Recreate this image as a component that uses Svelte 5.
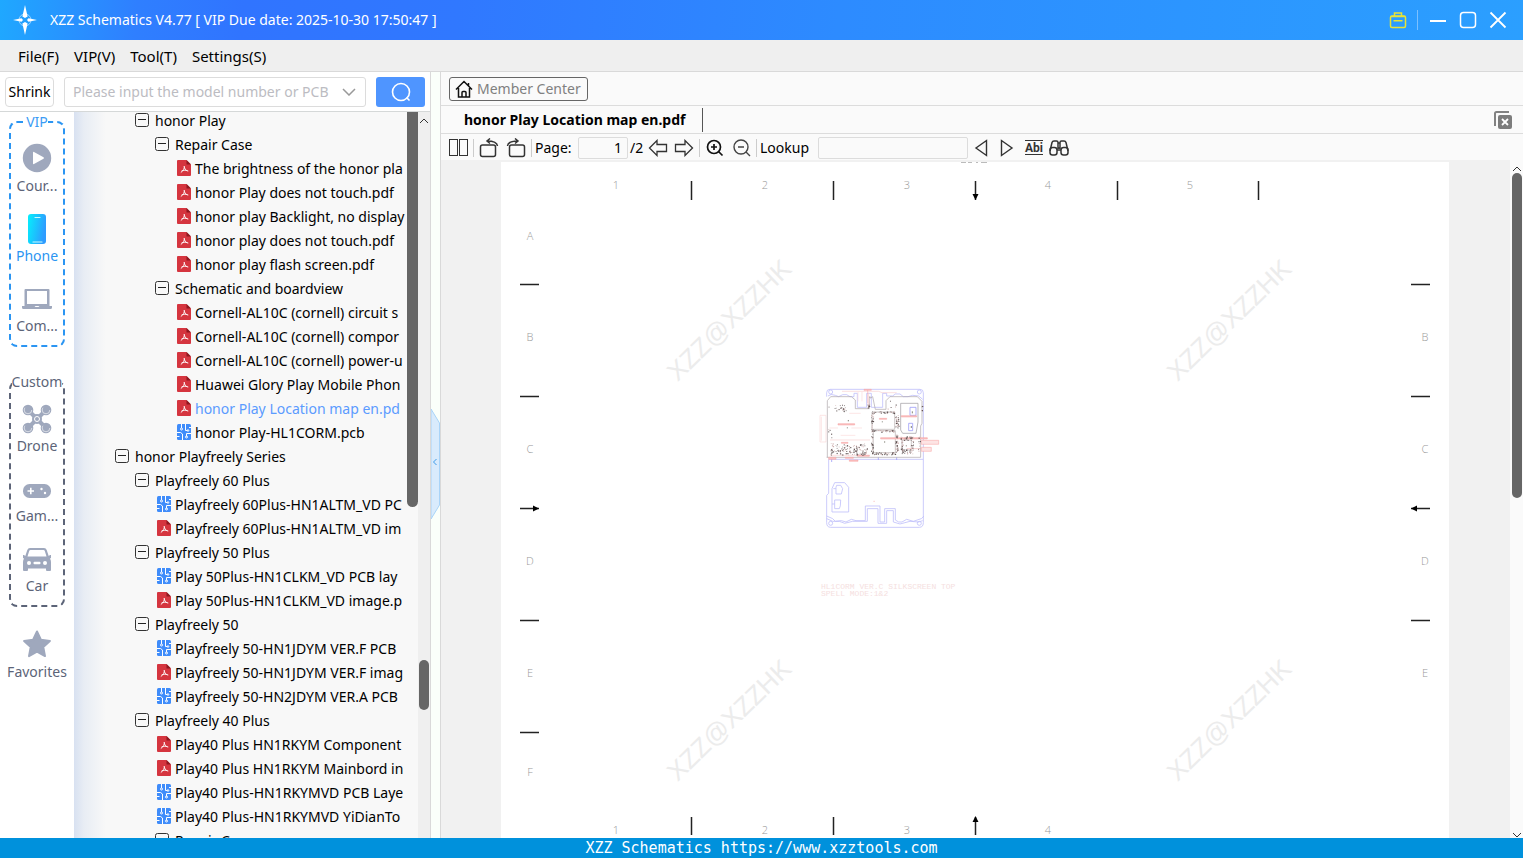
<script>
  const menus = ['File(F)', 'VIP(V)', 'Tool(T)', 'Settings(S)']

  const groups = [
    {
      title: 'VIP',
      items: [
        { id: 'course', label: 'Cour...' },
        { id: 'phone', label: 'Phone' },
        { id: 'computer', label: 'Com...' }
      ]
    },
    {
      title: 'Custom',
      items: [
        { id: 'drone', label: 'Drone' },
        { id: 'game', label: 'Gam...' },
        { id: 'car', label: 'Car' }
      ]
    }
  ]

  const tree = [
    { level: 1, type: 'node', name: 'honor Play' },
    { level: 2, type: 'node', name: 'Repair Case' },
    { level: 3, type: 'pdf', name: 'The brightness of the honor pla' },
    { level: 3, type: 'pdf', name: 'honor Play does not touch.pdf' },
    { level: 3, type: 'pdf', name: 'honor play Backlight, no display' },
    { level: 3, type: 'pdf', name: 'honor play does not touch.pdf' },
    { level: 3, type: 'pdf', name: 'honor play flash screen.pdf' },
    { level: 2, type: 'node', name: 'Schematic and boardview' },
    { level: 3, type: 'pdf', name: 'Cornell-AL10C (cornell) circuit s' },
    { level: 3, type: 'pdf', name: 'Cornell-AL10C (cornell) compor' },
    { level: 3, type: 'pdf', name: 'Cornell-AL10C (cornell) power-u' },
    { level: 3, type: 'pdf', name: 'Huawei Glory Play Mobile Phon' },
    { level: 3, type: 'pdf', name: 'honor Play Location map en.pd' },
    { level: 3, type: 'pcb', name: 'honor Play-HL1CORM.pcb' },
    { level: 0, type: 'node', name: 'honor Playfreely Series' },
    { level: 1, type: 'node', name: 'Playfreely 60 Plus' },
    { level: 2, type: 'pcb', name: 'Playfreely 60Plus-HN1ALTM_VD PC' },
    { level: 2, type: 'pdf', name: 'Playfreely 60Plus-HN1ALTM_VD im' },
    { level: 1, type: 'node', name: 'Playfreely 50 Plus' },
    { level: 2, type: 'pcb', name: 'Play 50Plus-HN1CLKM_VD PCB lay' },
    { level: 2, type: 'pdf', name: 'Play 50Plus-HN1CLKM_VD image.p' },
    { level: 1, type: 'node', name: 'Playfreely 50' },
    { level: 2, type: 'pcb', name: 'Playfreely 50-HN1JDYM VER.F PCB' },
    { level: 2, type: 'pdf', name: 'Playfreely 50-HN1JDYM VER.F imag' },
    { level: 2, type: 'pcb', name: 'Playfreely 50-HN2JDYM VER.A PCB' },
    { level: 1, type: 'node', name: 'Playfreely 40 Plus' },
    { level: 2, type: 'pdf', name: 'Play40 Plus HN1RKYM Component' },
    { level: 2, type: 'pdf', name: 'Play40 Plus HN1RKYM Mainbord in' },
    { level: 2, type: 'pcb', name: 'Play40 Plus-HN1RKYMVD PCB Laye' },
    { level: 2, type: 'pcb', name: 'Play40 Plus-HN1RKYMVD YiDianTo' },
    { level: 2, type: 'node', name: 'Repair Case' }
  ]

  let section = 'phone'
  let selected = 'honor Play Location map en.pd'
  let query = ''
  let page = '1'
  let lookup = ''

  // sheet frame
  const topNumbers = [[115, 1], [264, 2], [406, 3], [547, 4], [689, 5]]
  const bottomNumbers = topNumbers.slice(0, 4)
  const rows = [[74, 'A'], [175, 'B'], [287, 'C'], [399, 'D'], [511, 'E'], [610, 'F']]
  const rightRows = rows.slice(1, 5)
  const watermarks = [[228, 158], [728, 158], [228, 558], [728, 558]]

  // small parts scattered along the chip edges: x, y, width, height, count
  const clusters = [
    [62, 220, 110, 34, 130],
    [72, 104, 40, 20, 22],
    [184, 124, 70, 5, 30],
    [184, 180, 72, 5, 30],
    [184, 246, 74, 7, 36],
    [183, 128, 6, 118, 46],
    [254, 132, 12, 42, 30],
    [256, 190, 8, 56, 30],
    [272, 198, 38, 12, 30],
    [272, 238, 38, 12, 30],
    [272, 208, 6, 34, 16],
    [302, 208, 8, 34, 16],
    [324, 200, 6, 60, 10],
    [332, 104, 5, 20, 6],
    [54, 90, 10, 160, 8],
    [170, 80, 8, 36, 10],
    [230, 88, 30, 28, 5]
  ]

  function scatter() {
    let seed = 7
    const rnd = () => (seed = (seed * 16807) % 2147483647) / 2147483647
    const parts = []
    for (const [x, y, w, h, n] of clusters) {
      for (let i = 0; i < n; i++) {
        parts.push({
          x: x + rnd() * w,
          y: y + rnd() * h,
          w: 1.5 + rnd() * 2.5,
          h: 1.5 + rnd() * 2.5,
          fill: rnd() > 0.4 ? '#5c5050' : '#cfb0b0'
        })
      }
    }
    return parts
  }

  const parts = scatter()
</script>

<div class="app">
  <header class="titlebar">
    <svg class="logo" viewBox="0 0 24 30" width="24" height="30">
      <circle cx="12" cy="15" r="6" fill="none" stroke="#fff" stroke-opacity=".5" />
      <path d="M12 0l2.6 11.500L12 13l-2.600-1.500zM12 30l2.600-11.500L12 17l-2.600 1.500zM0 15l8.500-1.800L10 15l-1.500 1.800zM24 15l-8.500-1.800L14 15l1.500 1.800z" fill="#fff" />
    </svg>
    <h1>XZZ Schematics V4.77 [ VIP Due date: 2025-10-30 17:50:47 ]</h1>
    <div class="window">
      <button aria-label="Toolbox">
        <svg viewBox="0 0 18 18" width="18" height="18" fill="none" stroke="#e8e337" stroke-width="1.500">
          <rect x="1.500" y="5" width="15" height="11.500" rx="1.500" />
          <path d="M5.500 5V2h7v3M4.500 9.800h9M2 5.500h14" />
        </svg>
      </button>
      <span class="bar"></span>
      <button aria-label="Minimize">
        <svg viewBox="0 0 18 18" width="18" height="18" stroke="#fff" stroke-width="2"><path d="M1 10h16" /></svg>
      </button>
      <button aria-label="Maximize">
        <svg viewBox="0 0 18 18" width="18" height="18" fill="none" stroke="#fff" stroke-width="1.500"><rect x="1.500" y="1.500" width="15" height="15" rx="3" /></svg>
      </button>
      <button aria-label="Close">
        <svg viewBox="0 0 18 18" width="18" height="18" stroke="#fff" stroke-width="1.800"><path d="M1.500 1.500l15 15M16.500 1.500l-15 15" /></svg>
      </button>
    </div>
  </header>

  <nav class="menubar">
    {#each menus as menu}
      <button>{menu}</button>
    {/each}
  </nav>

  <main>
    <aside class="left">
      <div class="search">
        <button class="shrink">Shrink</button>
        <div class="combo">
          <input type="text" aria-label="Model number" placeholder="Please input the model number or PCB" bind:value={query} />
          <button aria-label="Show history">
            <svg viewBox="0 0 14 8" width="14" height="8" fill="none" stroke="#999" stroke-width="1.500"><path d="M1 1l6 6 6-6" /></svg>
          </button>
        </div>
        <button class="go" aria-label="Search">
          <svg viewBox="0 0 20 20" width="20" height="20" fill="none" stroke="#fff" stroke-width="1.600">
            <circle cx="10" cy="10" r="8.500" /><path d="M15.500 15.500l3 3" />
          </svg>
        </button>
      </div>

      <div class="browse">
        <div class="sections">
          {#each groups as group}
            <fieldset class={group.title.toLowerCase()}>
              <legend>{group.title}</legend>
              {#each group.items as item}
                <button class="section" class:active={section === item.id} on:click={() => section = item.id}>
                  <svg viewBox="0 0 32 32" width="32" height="32" fill="#9fa8bd">
                    {#if item.id === 'course'}
                      <circle cx="16" cy="16" r="14.200" />
                      <path d="M12 10.500v11q0 1 1 .6l9.500-5.300q1-.8 0-1.600L13 9.900q-1-.4-1 .6z" fill="#fff" />
                    {:else if item.id === 'phone'}
                      <defs>
                        <linearGradient id="phone-fill" x2="1" y2=".3">
                          <stop offset="0" stop-color="#05f0fc" /><stop offset="1" stop-color="#2e9cff" />
                        </linearGradient>
                      </defs>
                      <rect x="7" y="2" width="18" height="30" rx="3" fill="url(#phone-fill)" />
                      <path d="M14 5.500h5M12 30h9" stroke="#c8fbff" stroke-width="1.200" stroke-linecap="round" />
                    {:else if item.id === 'computer'}
                      <path fill-rule="evenodd" d="M4.500 7h23q1 0 1 1v16h-25V8q0-1 1-1zM6 9v13h20V9z" />
                      <path d="M1 24h12.500l1 1h3l1-1H31v1.500q0 1.500-1.500 1.500h-27Q1 27 1 25.500z" />
                    {:else if item.id === 'drone'}
                      <path d="M8 9l16 16M24 9L8 25" stroke="#9fa8bd" stroke-width="4" />
                      <circle cx="16" cy="17" r="5" />
                      <circle cx="16" cy="17" r="2.500" fill="none" stroke="#fff" />
                      {#each [[7, 8], [25, 8], [7, 26], [25, 26]] as [x, y]}
                        <circle cx={x} cy={y} r="5.300" />
                        <circle cx={x} cy={y} r="3.800" fill="none" stroke="#fff" stroke-width=".6" stroke-dasharray="14 10" />
                      {/each}
                    {:else if item.id === 'game'}
                      <rect x="2" y="12" width="28" height="14" rx="6.500" />
                      <path d="M6.500 19h6.500M9.800 15.800v6.500" stroke="#fff" stroke-width="1.600" />
                      <circle cx="20.500" cy="17" r="1.200" fill="#fff" /><circle cx="24" cy="21" r="1.200" fill="#fff" />
                    {:else}
                      <path fill-rule="evenodd" d="M9 6h14q2 0 2.700 2l2 6 1.300-1h1v3l-1 .5q1 1.500 1 3.500v8q0 1-1 1h-3q-1 0-1-1v-1.500H7V28q0 1-1 1H3q-1 0-1-1v-8q0-2 1-3.500L2 16v-3h1l1.300 1 2-6Q7 6 9 6zM9.500 8q-1 0-1.300 1l-1.700 5.500h19L23.800 9q-.3-1-1.300-1z" />
                      <circle cx="8" cy="21" r="2" fill="#fff" /><circle cx="24" cy="21" r="2" fill="#fff" />
                      <rect x="12.500" y="19.800" width="7" height="2.400" rx="1" fill="#fff" />
                    {/if}
                  </svg>
                  <span>{item.label}</span>
                </button>
              {/each}
            </fieldset>
          {/each}
          <button class="section favorites">
            <svg viewBox="0 0 32 32" width="32" height="32" fill="#9fa8bd" stroke="#9fa8bd" stroke-width="2" stroke-linejoin="round">
              <path d="M16 3.500l3.900 8.200 9 1.200-6.600 6.200 1.700 9-8-4.400-8 4.400 1.700-9L3.100 12.900l9-1.200z" />
            </svg>
            <span>Favorites</span>
          </button>
        </div>

        <div class="tree">
          <ul>
            {#each tree as row}
              <li style="padding-left: {row.level * 20}px">
                <button class:selected={row.name === selected} on:click={() => selected = row.name}>
                  {#if row.type === 'node'}
                    <svg viewBox="0 0 14 14" width="14" height="14" fill="none" stroke="#333">
                      <rect x=".5" y=".5" width="13" height="13" rx="2" /><path d="M3 6.500h8" stroke="#222" />
                    </svg>
                  {:else if row.type === 'pdf'}
                    <svg viewBox="0 0 14 16" width="14" height="16">
                      <path d="M1 0H9.500L14 4.500V15q0 1-1 1H1q-1 0-1-1V1q0-1 1-1z" fill="#d5353f" />
                      <path d="M9.500 0L14 4.500H9.500z" fill="#8e1820" />
                      <path d="M7.200 6c.6 2-.8 5-3.400 6.500M4.500 11c2-1 4.500-1 6.800 0M7.300 6.500c0 2 1.200 3.500 3 4.500" fill="none" stroke="#fff" stroke-opacity=".9" />
                    </svg>
                  {:else}
                    <svg viewBox="0 0 14 16" width="14" height="16" fill="none" stroke="#fff">
                      <rect width="14" height="16" rx="1.500" fill="#3f8cfa" stroke="none" />
                      <path d="M4.500 0v4M0 8.500h3.500l2 1.500v6M8.500 0v6.500h2M14 3.500h-2M14 9.500H9.500v3M0 12.500h2.500" />
                      <circle cx="4.500" cy="5" r="1" /><circle cx="11" cy="6.500" r=".8" /><circle cx="9.500" cy="13" r="1" />
                    </svg>
                  {/if}
                  <span>{row.name}</span>
                </button>
              </li>
            {/each}
          </ul>
          <div class="inner-thumb"></div>
        </div>

        <div class="lane">
          <svg viewBox="0 0 10 6" width="10" height="6" fill="none" stroke="#333"><path d="M1 5l4-4 4 4" /></svg>
          <div class="outer-thumb"></div>
        </div>
      </div>
    </aside>

    <div class="splitter">
      <button aria-label="Collapse panel">
        <svg viewBox="0 0 9 112" width="9" height="112" fill="none">
          <path d="M0 1l8.500 14v82L0 111z" fill="#d9ebfc" stroke="#a9d4f8" />
          <path d="M5.500 51l-3 3 3 3" stroke="#3d9be9" />
        </svg>
      </button>
    </div>

    <section class="right">
      <div class="center-row">
        <button class="member">
          <svg viewBox="0 0 18 18" width="18" height="18" fill="none" stroke="#111" stroke-width="1.500">
            <path d="M1 9.500L9 1.500l8 8M3.500 8v9h11V8M13.500 3v3M7 17v-4.500q0-1 1-1h2q1 0 1 1V17" />
          </svg>
          Member Center
        </button>
      </div>

      <div class="tabs">
        <button class="tab">honor Play Location map en.pdf</button>
        <button class="close-all" aria-label="Close all tabs">
          <svg viewBox="0 0 18 18" width="18" height="18">
            <path d="M1 15V2.500Q1 1 2.500 1H15" fill="none" stroke="#828282" stroke-width="2" />
            <rect x="4" y="4" width="14" height="14" rx="2" fill="#7c7c7c" />
            <path d="M8 8l6 6M14 8l-6 6" stroke="#fff" stroke-width="1.800" />
          </svg>
        </button>
      </div>

      <div class="toolbar">
        <button aria-label="Two pages">
          <svg viewBox="0 0 20 18" width="20" height="18" fill="none" stroke="#333"><rect x="1.500" y=".5" width="8" height="16" /><rect x="11.500" y=".5" width="8" height="16" /></svg>
        </button>
        <span class="sep"></span>
        <button aria-label="Rotate left">
          <svg viewBox="0 0 20 20" width="20" height="20" fill="none" stroke="#333" stroke-width="1.500"><rect x="1.500" y="7" width="15" height="11.500" rx="2" /><path d="M18.500 8Q18 3 8 3M11 .5L8 3l3 2.500" /></svg>
        </button>
        <button class="rotate" aria-label="Rotate right">
          <svg viewBox="0 0 20 20" width="20" height="20" fill="none" stroke="#333" stroke-width="1.500"><rect x="3.500" y="7" width="15" height="11.500" rx="2" /><path d="M1.500 8Q2 3 12 3M9 .5L12 3 9 5.500" /></svg>
        </button>
        <span class="sep tight"></span>
        <label class="page" for="page">Page:</label>
        <input id="page" type="text" bind:value={page} />
        <span class="total">/2</span>
        <button aria-label="Previous page">
          <svg viewBox="0 0 20 18" width="20" height="18" fill="none" stroke="#333" stroke-width="1.300"><path d="M1.500 9L9 1.500v4h9.500v7H9v4z" /></svg>
        </button>
        <button class="next" aria-label="Next page">
          <svg viewBox="0 0 20 18" width="20" height="18" fill="none" stroke="#333" stroke-width="1.300"><path d="M18.500 9L11 1.500v4H1.500v7H11v4z" /></svg>
        </button>
        <span class="sep"></span>
        <button class="zoom-in" aria-label="Zoom in">
          <svg viewBox="0 0 18 18" width="18" height="18" fill="none" stroke="#111" stroke-width="1.700"><circle cx="8" cy="8" r="6.500" /><path d="M12.500 12.500l4 4M5 8h6M8 5v6" /></svg>
        </button>
        <button class="zoom-out" aria-label="Zoom out">
          <svg viewBox="0 0 18 18" width="18" height="18" fill="none" stroke="#444" stroke-width="1.400"><circle cx="8" cy="8" r="7" /><path d="M13 13l4 4M5 8h6" /></svg>
        </button>
        <span class="sep tight"></span>
        <label class="lookup" for="lookup">Lookup</label>
        <input id="lookup" type="text" bind:value={lookup} />
        <button class="find" aria-label="Find previous">
          <svg viewBox="0 0 14 18" width="14" height="18" fill="none" stroke="#333" stroke-width="1.400"><path d="M12.500 1.500v15L2 9z" /></svg>
        </button>
        <button class="find" aria-label="Find next">
          <svg viewBox="0 0 14 18" width="14" height="18" fill="none" stroke="#333" stroke-width="1.400"><path d="M1.500 1.500v15L12 9z" /></svg>
        </button>
        <button class="abi">Abi</button>
        <button aria-label="Search in document">
          <svg viewBox="0 0 20 16" width="20" height="16" fill="none" stroke="#333" stroke-width="1.500">
            <path d="M1 11L3 2.500Q3.500 1 5 1h2.500Q9 1 9 2.500V11M19 11l-2-8.500Q16.500 1 15 1h-2.500Q11 1 11 2.500V11M9 3h2M9 8h2" />
            <rect x="1" y="7.500" width="7" height="7.500" rx="2.500" /><rect x="12" y="7.500" width="7" height="7.500" rx="2.500" />
          </svg>
        </button>
      </div>

      <div class="viewer">
        <div class="canvas">
          <svg class="sheet" viewBox="0 0 948 676" preserveAspectRatio="xMidYMin slice">
            <path d="M460 .5h5M467 .5h4M475 .5h2M480 .5h6" stroke="#bbb" />

            <g class="ticks">
              <path d="M190.500 19v19M332.500 19v19M474.500 19v19M616.500 19v19M757.500 19v19" />
              <path d="M190.500 655v18M332.500 655v18M474.500 655v18" />
              <path d="M19 122.500h19M19 234.500h19M19 346.500h19M19 458.500h19M19 570.500h19" />
              <path d="M910 122.500h19M910 234.500h19M910 346.500h19M910 458.500h19" />
            </g>
            <path d="M474.500 38l-3-6h6zM474.500 654l-3 6h6zM38 346.500l-6-3v6zM910 346.500l6-3v6z" />

            <g class="marks">
              {#each topNumbers as [x, n]}<text {x} y="27">{n}</text>{/each}
              {#each bottomNumbers as [x, n]}<text {x} y="672">{n}</text>{/each}
              {#each rows as [y, c]}<text x="29" y={y + 4}>{c}</text>{/each}
              {#each rightRows as [y, c]}<text x="924" y={y + 4}>{c}</text>{/each}
            </g>

            <g class="watermark">
              {#each watermarks as [x, y]}
                <text transform="translate({x} {y}) rotate(-44)" y="9">XZZ@XZZHK</text>
              {/each}
            </g>

            <g transform="translate(309 208) scale(.3333)" fill="none" stroke-width="2">
              <!-- shield outlines -->
              <g stroke="#c0c0fa" stroke-width="2.500">
                <path d="M50 80V68q0-10 10-10h270q10 0 10 10v390q0 14-12 14H62q-12 0-12-14V376l6-6V268h284" />
                <path d="M54 78q8-8 22-2l10 4 12-6h12l10 6h12V70h10v42h28V70h14v42h34V70h12v8h18l8-6h14l10 8h14l14-4 18 2 12 10" />
                <path d="M50 438l18 8 8 8 18-2 14 4 16-8 14 4h28v-44h44v48h14v-40h32v34l10 6h10l14-8 20 6 24-8 8-8" />
                <path d="M50 446l18 8h20l16 6 24-6h44v-38h32v44h26v-38h20v34l20 6 30-8 26 2 12-4" />
                <path d="M66 400v-44l8-18h30l12 14v74H66zM78 352v20h16l4-16-6-10H80zM74 390v26h14q4-4 4-26zM70 356h8M66 402h8" />
                <circle cx="62" cy="66" r="6" /><circle cx="328" cy="66" r="6" /><circle cx="62" cy="460" r="6" /><circle cx="328" cy="460" r="6" />
                <path d="M300 112h18v24h-18zM296 160h12v22h-12zM65 262v14M205 262v8M260 262v8" stroke="#a0a0f8" />
              </g>
              <!-- board edge -->
              <path d="M52 262V92l10-12h62l12 10v26h42V86l10-6 8 38h32V92l12-12h82l14 14v66l-4 8v94H50" stroke="#aaa5a8" />
              <path d="M272 100h52v56l-6 34h-40l-6-10z" stroke="#99969c" />
              <path d="M186 126h68v52h-68zM190 182h66v66h-66zM276 210h28v30h-28z" stroke="#b5adad" />
              <path d="M30 136h18v80H30zM34 140v72M144 66v28M156 66v28M118 130h34M58 174h26M124 174h32M92 196h44" stroke="#fadada" />
              <path d="M96 64h110l10 4h44M176 68v46M60 210h120M60 256h120" stroke="#f7d0d0" />
              <!-- part labels -->
              <g fill="#fbc4c4" stroke="#f7a0a0" stroke-width="1.500">
                <path d="M162 58h22v3h-22zM84 161h50v4H84zM208 145h22v3h-22zM94 217h20v3H94zM118 270h26v4h-26zM106 262h24v3h-24zM56 262h22v6H56zM142 256h36v3h-36z" />
                <path d="M212 203h140v4H212zM274 137h46v4h-46z" />
                <path d="M334 211h52v12h-52zM334 232h30v12h-30zM190 394h5" fill="#fde4e4" />
                <path d="M290 236h44M173 60v40" />
              </g>
              {#each parts as p}
                <rect x={p.x} y={p.y} width={p.w} height={p.h} fill={p.fill} />
              {/each}
              <path d="M115 150v4M112 172v3M217 154v3M224 214v4M289 226v3M307 124v6M304 168v6" stroke="#443" />
            </g>

            <g class="caption">
              <text x="320" y="427">HL1CORM VER.C SILKSCREEN TOP</text>
              <text x="320" y="434">SPELL MODE:1&amp;2</text>
            </g>
          </svg>
        </div>
        <div class="vscroll">
          <svg viewBox="0 0 10 6" width="10" height="6" fill="none" stroke="#333"><path d="M1 5l4-4 4 4" /></svg>
          <div class="thumb"></div>
          <svg viewBox="0 0 10 6" width="10" height="6" fill="none" stroke="#333"><path d="M1 1l4 4 4-4" /></svg>
        </div>
      </div>
    </section>
  </main>

  <footer>XZZ Schematics https://www.xzztools.com</footer>
</div>

<style>
  :global(body) { margin: 0; }
  .app {
    display: flex;
    flex-direction: column;
    height: 100vh;
    overflow: hidden;
    font: 14px/20px "Noto Sans", sans-serif;
    color: #000;
    background: #fafafa;
  }
  button, input {
    font: inherit;
    color: inherit;
    margin: 0;
    padding: 0;
    border: 0;
    background: none;
    box-sizing: border-box;
  }
  svg { display: block; flex: none; }

  .titlebar {
    flex: none;
    display: flex;
    align-items: center;
    height: 40px;
    padding: 0 16px 0 13px;
    color: #fff;
    background: linear-gradient(95deg, #1fa8ff 0%, #2f7fff 9%, #3074ff 16%, #3078ff 30%, #2d8bff 55%, #2b9fff 100%);
  }
  h1 { margin: 0 auto 0 13px; font-size: 14px; font-weight: 400; }
  .window { display: flex; align-items: center; gap: 12px; }
  .bar { width: 1px; height: 20px; margin: 0 -1px 0 -2px; background: #7cc0ff; }

  .menubar {
    flex: none;
    display: flex;
    gap: 15px;
    height: 31px;
    padding: 0 18px;
    background: #efefef;
    border-bottom: 1px solid #d9d9d9;
    font-size: 15px;
  }

  main { flex: 1; display: flex; min-height: 0; }
  .left {
    flex: none;
    display: flex;
    flex-direction: column;
    width: 430px;
    border-right: 1px solid #d9d9d9;
    background: #fff;
  }
  .search {
    display: flex;
    align-items: center;
    gap: 10px;
    height: 39px;
    padding: 0 5px;
    border-bottom: 1px solid #d5d8d8;
  }
  .shrink { width: 49px; height: 30px; border: 1px solid #dcdcdc; border-radius: 4px; }
  .combo {
    flex: 1;
    display: flex;
    align-items: center;
    min-width: 0;
    height: 30px;
    padding: 0 9px 0 8px;
    border: 1px solid #dcdcdc;
    border-radius: 3px;
    box-sizing: border-box;
  }
  .combo input { flex: 1; min-width: 0; outline: 0; }
  .combo input::placeholder { color: #bcbcc2; opacity: 1; }
  .combo button { margin-left: 6px; }
  .go {
    display: grid;
    place-items: center;
    width: 49px;
    height: 30px;
    border-radius: 3px;
    background: #4f95ff;
  }

  .browse { flex: 1; display: flex; min-height: 0; }
  .sections { flex: none; width: 74px; }
  fieldset {
    min-width: 0;
    margin: 0 9px 25px;
    padding: 0 0 3px;
    border: 2px dashed #5c6478;
    border-radius: 8px;
    color: #5c6478;
  }
  fieldset.vip { border-color: #2b95f2; }
  fieldset.vip legend { color: #3b9cf5; }
  legend { margin: 0 auto; padding: 0; height: 20px; }
  .section {
    display: flex;
    flex-direction: column;
    align-items: center;
    gap: 2px;
    width: 100%;
    height: 70px;
    padding-top: 10px;
    color: #5c6478;
  }
  .section.active { color: #2b95f2; }
  .favorites { margin-top: -14px; }

  .tree {
    flex: 1;
    display: flex;
    min-width: 0;
    background: linear-gradient(90deg, #d8e1f1 0, #e8edf4 10px, #f8f8f8 32px);
  }
  ul {
    flex: 1;
    min-width: 0;
    margin: -3px 0 0;
    padding: 0 0 0 41px;
    list-style: none;
    overflow: hidden;
  }
  li button {
    display: flex;
    align-items: center;
    gap: 6px;
    height: 24px;
    width: 100%;
    white-space: nowrap;
  }
  li button.selected { color: #5b9bff; }
  li svg { margin-bottom: 2px; }
  li svg[height="16"] { margin: 0 -2px 2px 2px; }
  .inner-thumb { width: 11px; height: 395px; background: #666; border-radius: 0 0 6px 6px; }
  .lane {
    display: flex;
    flex-direction: column;
    align-items: center;
    width: 12px;
    padding-top: 6px;
    background: #efefef;
  }
  .outer-thumb { width: 10px; height: 50px; margin-top: 536px; border-radius: 5px; background: #666; }

  .splitter {
    flex: none;
    display: flex;
    align-items: center;
    width: 9px;
    padding-top: 18px;
    background: #fafffa;
    border-right: 1px solid #d9d9d9;
  }

  .right { flex: 1; display: flex; flex-direction: column; min-width: 0; }
  .center-row {
    display: flex;
    align-items: center;
    height: 33px;
    padding: 0 8px;
    border-bottom: 1px solid #dcdcdc;
  }
  .member {
    display: flex;
    align-items: center;
    gap: 4px;
    height: 24px;
    padding: 0 6px 0 5px;
    border: 1px solid #666;
    border-radius: 3px;
    color: #808080;
  }
  .tabs {
    display: flex;
    align-items: center;
    justify-content: space-between;
    height: 27px;
    padding: 0 11px 0 8px;
    border-bottom: 1px solid #dcdcdc;
  }
  .tab { height: 24px; padding: 0 17px 0 15px; border-right: 1px solid #555; font-weight: 700; }
  .toolbar {
    display: flex;
    align-items: center;
    height: 25px;
    padding: 1px 0 0 7px;
    white-space: nowrap;
  }
  .sep { width: 1px; height: 18px; margin: 0 5px; background: #ccc; }
  .sep.tight { margin-right: 3px; }
  .toolbar input { height: 22px; border: 1px solid #dcdcdc; border-radius: 2px; }
  .rotate { margin-left: 7px; }
  .page { width: 43px; }
  #page { width: 50px; padding-right: 5px; text-align: right; }
  .total { width: 20px; padding-left: 2px; box-sizing: border-box; }
  .next { margin-left: 6px; }
  .zoom-in { margin-left: 1px; }
  .zoom-out { margin-left: 9px; }
  .lookup { width: 58px; }
  #lookup { width: 150px; }
  .find { margin: 0 6px; }
  .abi {
    height: 15px;
    margin: 0 6px 0 5px;
    border: solid #333;
    border-width: 1px 0;
    font: 700 12px/12px Roboto, sans-serif;
    color: #333;
  }

  .viewer { flex: 1; display: flex; min-height: 0; }
  .canvas { flex: 1; min-width: 0; padding: 2px 61px 0 60px; background: #f1f1f1; }
  .sheet { width: 100%; height: 100%; background: #fff; }
  .ticks { fill: none; stroke: #222; stroke-width: 1.5px; }
  .marks { font: 300 11px "Open Sans", sans-serif; fill: #999; text-anchor: middle; }
  .watermark { font: 26px "Liberation Sans", sans-serif; fill: #ececec; text-anchor: middle; }
  .caption { font: 8px "Liberation Mono", monospace; fill: #f5e0e0; }
  .vscroll {
    display: flex;
    flex-direction: column;
    align-items: center;
    width: 13px;
    padding-top: 6px;
  }
  .thumb { width: 10px; height: 325px; margin: 1px 0 auto; border-radius: 5px; background: #666; }

  footer {
    flex: none;
    height: 20px;
    text-align: center;
    font: 15px/20px "DejaVu Sans Mono", monospace;
    color: #fff;
    background: #0091dc;
  }
</style>
